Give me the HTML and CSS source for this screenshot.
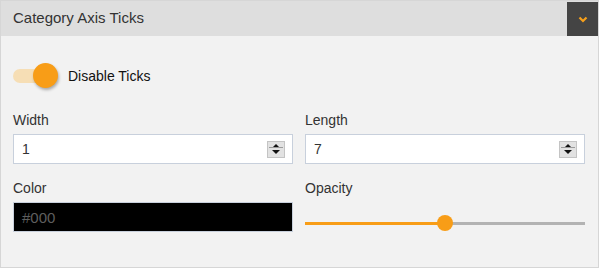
FILE: index.html
```html
<!DOCTYPE html>
<html>
<head>
<meta charset="utf-8">
<link rel="stylesheet" href="styles.css">
</head>
<body>
<div class="panel">
  <div class="header">
    <span class="title">Category Axis Ticks</span>
    <div class="collapse">
      <svg width="10" height="7" viewBox="0 0 10 7"><polyline points="1.5,1.5 5,5 8.5,1.5" fill="none" stroke="#f7a01b" stroke-width="2.2"/></svg>
    </div>
  </div>
  <div class="content">
    <div class="toggle-row">
      <div class="toggle"><div class="track"></div><div class="knob"></div></div>
      <span class="toggle-label">Disable Ticks</span>
    </div>
    <div class="grid">
      <div class="field">
        <label class="label">Width</label>
        <div class="input">
          <span class="value">1</span>
          <div class="spinner"><div class="up"></div><div class="down"></div></div>
        </div>
      </div>
      <div class="field">
        <label class="label">Length</label>
        <div class="input">
          <span class="value">7</span>
          <div class="spinner"><div class="up"></div><div class="down"></div></div>
        </div>
      </div>
      <div class="field">
        <label class="label">Color</label>
        <div class="input color-input"><span class="value">#000</span></div>
      </div>
      <div class="field">
        <label class="label">Opacity</label>
        <div class="slider">
          <div class="fill" style="width:140px"></div>
          <div class="rest"></div>
          <div class="thumb" style="left:132px"></div>
        </div>
      </div>
    </div>
  </div>
</div>
</body>
</html>
```
FILE: styles.css
```css
* { box-sizing: border-box; }
body {
  margin: 0;
  font-family: "Liberation Sans", Arial, sans-serif;
  background: #ffffff;
  color: #333;
}
.panel {
  width: 599px;
  height: 268px;
  border: 1px solid #d6d6d6;
  background: #f2f2f2;
}
.header {
  height: 35px;
  background: #dedede;
  display: flex;
  align-items: flex-start;
}
.title {
  font-size: 15px;
  color: #333;
  padding-left: 12px;
  line-height: 34px;
}
.collapse {
  margin-left: auto;
  margin-top: 1px;
  width: 31px;
  height: 34px;
  background: #444444;
  display: flex;
  align-items: center;
  justify-content: center;
}
.collapse svg { display: block; margin-top: 1px; }
.content {
  padding: 0 12px;
}
.toggle-row {
  display: flex;
  align-items: center;
  height: 26px;
  margin-top: 27px;
}
.toggle {
  position: relative;
  width: 46px;
  height: 26px;
}
.track {
  position: absolute;
  left: 0;
  top: 6px;
  width: 40px;
  height: 14px;
  border-radius: 7px;
  background: #f6deb5;
}
.knob {
  position: absolute;
  left: 20px;
  top: 0;
  width: 25px;
  height: 25px;
  border-radius: 50%;
  background: #f89d17;
  box-shadow: 1px 2px 3px rgba(0,0,0,0.3);
}
.toggle-label {
  font-size: 14px;
  color: #111;
  margin-left: 9px;
}
.grid {
  display: grid;
  grid-template-columns: 280px 280px;
  column-gap: 12px;
  row-gap: 16px;
  margin-top: 23px;
}
.field { display: flex; flex-direction: column; }
.label {
  font-size: 14px;
  color: #333;
  line-height: 16px;
  margin-bottom: 6px;
}
.input {
  height: 30px;
  background: #fff;
  border: 1px solid #c8d0dc;
  display: flex;
  align-items: center;
  padding-left: 8px;
  padding-right: 7px;
}
.value {
  font-size: 14px;
  color: #333;
  flex: 1;
}
.spinner {
  width: 18px;
  height: 17px;
  background: #e2e2e2;
  border: 1px solid #c4c4c4;
  display: flex;
  flex-direction: column;
  align-items: center;
  justify-content: center;
}
.up, .down {
  width: 0;
  height: 0;
  border-left: 4px solid transparent;
  border-right: 4px solid transparent;
}
.up { border-bottom: 4px solid #111; margin-bottom: 2px; }
.down { border-top: 4px solid #111; border-bottom: 0; position: relative; }
.spinner .down::before {
  content: "";
  position: absolute;
  left: -7px;
  top: -7px;
  width: 14px;
  height: 1px;
  background: #9a9a9a;
}
.color-input {
  background: #000;
  border-color: #c8d0dc;
}
.color-input .value {
  color: #5e5e5e;
  font-size: 15px;
}
.slider {
  position: relative;
  height: 16px;
  margin-top: 13px;
  display: flex;
  align-items: center;
}
.fill {
  height: 3px;
  background: #f89d17;
}
.rest {
  flex: 1;
  height: 3px;
  background: #b3b3b3;
}
.thumb {
  position: absolute;
  top: 0;
  width: 16px;
  height: 16px;
  border-radius: 50%;
  background: #f89d17;
}
```
